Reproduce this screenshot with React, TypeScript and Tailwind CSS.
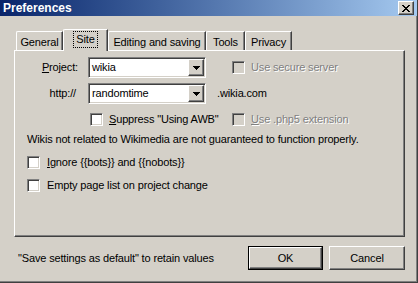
const sunken =
  "border border-t-[#808080] border-l-[#808080] border-b-white border-r-white shadow-[inset_1px_1px_0_#404040,inset_-1px_-1px_0_#d4d0c8]";
const raised =
  "border border-t-white border-l-white border-b-[#404040] border-r-[#404040] shadow-[inset_-1px_-1px_0_#808080]";
const disabledText = "text-[#808080] [text-shadow:1px_1px_0_#ffffff]";

const Check = ({ disabled }: { disabled?: boolean }) => (
  <span
    className={`inline-block w-[13px] h-[13px] shrink-0 ${sunken} ${
      disabled ? "bg-[#d4d0c8]" : "bg-white"
    }`}
  />
);

const Arrow = () => (
  <svg width="7" height="4" shapeRendering="crispEdges">
    <path d="M0 0h7v1H0zM1 1h5v1H1zM2 2h3v1H2zM3 3h1v1H3z" fill="#000" />
  </svg>
);

const Combo = ({ value }: { value: string }) => (
  <div className={`w-[118px] h-[21px] bg-white flex items-center p-px ${sunken}`}>
    <span className="flex-1 pl-[2px] leading-none">{value}</span>
    <span
      className={`w-[16px] h-[17px] bg-[#d4d0c8] flex items-center justify-center ${raised}`}
    >
      <Arrow />
    </span>
  </div>
);

const tabs = [
  { label: "General", width: "w-[47px]" },
  { label: "Site", width: "w-[45px]" },
  { label: "Editing and saving", width: "w-[98px]" },
  { label: "Tools", width: "w-[39px]" },
  { label: "Privacy", width: "w-[47px]" },
];

const Tab = ({ label, width, active }: { label: string; width: string; active: boolean }) =>
  active ? (
    <div
      className={`${width} h-[22px] -mb-px relative z-10 bg-[#d4d0c8] border-t border-l border-t-white border-l-white border-r border-r-[#404040] shadow-[inset_-1px_0_0_#808080] rounded-tl-[2px] flex justify-center pt-[1px]`}
    >
      <span className="h-[17px] px-[2px] border border-dotted border-black flex items-center">
        {label}
      </span>
    </div>
  ) : (
    <div
      className={`${width} h-[19px] border-t border-l border-t-white border-l-white border-r border-r-[#404040] shadow-[inset_-1px_0_0_#808080] rounded-tl-[2px] flex items-center justify-center pt-[2px] whitespace-nowrap`}
    >
      {label}
    </div>
  );

const Button = ({ label, isDefault }: { label: string; isDefault?: boolean }) => (
  <div className={`h-[24px] ${isDefault ? "w-[75px] border border-black" : "w-[76px]"}`}>
    <div className={`w-full h-full flex items-center justify-center ${raised}`}>{label}</div>
  </div>
);

export default function App() {
  return (
    <div
      className="w-[418px] h-[283px] overflow-hidden bg-[#d4d0c8] border-r border-b border-r-[#404040] border-b-[#404040] shadow-[inset_-1px_-1px_0_#808080] flex flex-col text-[11px] tracking-[-0.15px] text-black select-none whitespace-nowrap"
      style={{ fontFamily: '"Liberation Sans", Arial, sans-serif' }}
    >
      <div className="h-[16px] shrink-0 bg-gradient-to-r from-[#0a246a] to-[#a6caf0] flex items-center pl-[3px] pr-[3px]">
        <span className="text-white font-bold text-[12px] leading-none tracking-normal">Preferences</span>
        <div className={`ml-auto w-[16px] h-[14px] bg-[#d4d0c8] flex items-center justify-center ${raised}`}>
          <svg width="8" height="7" shapeRendering="crispEdges">
            <path
              d="M0 0h2v1H0zM6 0h2v1H6zM1 1h2v1H1zM5 1h2v1H5zM2 2h4v1H2zM3 3h2v1H3zM2 4h4v1H2zM1 5h2v1H1zM5 5h2v1H5zM0 6h2v1H0zM6 6h2v1H6z"
              fill="#000"
            />
          </svg>
        </div>
      </div>

      <div className="mt-[13px] ml-[14px] mr-[12px]">
        <div className="h-[21px] flex items-end pl-[2px]">
          {tabs.map((t) => (
            <Tab key={t.label} label={t.label} width={t.width} active={t.label === "Site"} />
          ))}
        </div>

        <div className="h-[187px] border border-t-white border-l-white border-b-[#404040] border-r-[#404040] shadow-[inset_-1px_-1px_0_#808080] pl-[12px] pt-[6px]">
          <div className="flex items-center h-[21px]">
            <span className="w-[51px] text-right">
              <span className="underline">P</span>roject:
            </span>
            <div className="ml-[10px]">
              <Combo value="wikia" />
            </div>
            <div className="ml-[26px] flex items-center gap-[6px]">
              <Check disabled />
              <span className={disabledText}>Use secure server</span>
            </div>
          </div>

          <div className="flex items-center h-[21px] mt-[5px]">
            <span className="w-[51px] text-right pr-[2px]">http://</span>
            <div className="ml-[10px]">
              <Combo value="randomtime" />
            </div>
            <span className="ml-[11px]">.wikia.com</span>
          </div>

          <div className="flex items-center h-[15px] mt-[8px] pl-[63px]">
            <div className="w-[142px] flex items-center">
              <Check />
              <span className="ml-[6px]">
                <span className="underline">S</span>uppress "Using AWB"
              </span>
            </div>
            <div className="flex items-center gap-[6px]">
              <Check disabled />
              <span className={disabledText}>
                <span className="underline">U</span>se .php5 extension
              </span>
            </div>
          </div>

          <div className="h-[14px] mt-[5px] flex items-center">
            Wikis not related to Wikimedia are not guaranteed to function properly.
          </div>

          <div className="flex items-center h-[15px] mt-[9px]">
            <Check />
            <span className="ml-[7px]">
              <span className="underline">I</span>gnore {"{{bots}}"} and {"{{nobots}}"}
            </span>
          </div>

          <div className="flex items-center h-[15px] mt-[8px]">
            <Check />
            <span className="ml-[7px]">Empty page list on project change</span>
          </div>
        </div>

        <div className="mt-[9px] h-[24px] flex items-center">
          <span className="flex-1 pl-[4px]">"Save settings as default" to retain values</span>
          <Button label="OK" isDefault />
          <div className="w-[6px]" />
          <Button label="Cancel" />
        </div>
      </div>
    </div>
  );
}
